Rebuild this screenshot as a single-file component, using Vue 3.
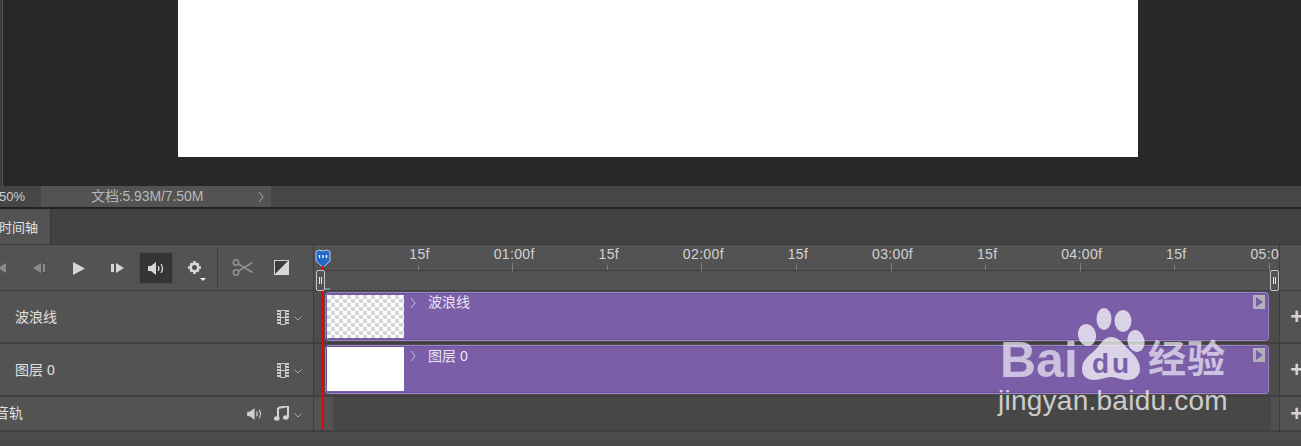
<script setup>
const ticks = ['15f','01:00f','15f','02:00f','15f','03:00f','15f','04:00f','15f','05:00f']
</script>

<template>
  <div class="app">
    <section class="canvas">
      <div class="ruler"></div>
      <div class="doc"></div>
    </section>

    <footer class="status">
      <span class="zoom">50%</span>
      <div class="info"><span>文档:5.93M/7.50M</span><svg class="chev" width="6" height="12" viewBox="0 0 6 12"><path d="M1 1l4 5-4 5" fill="none" stroke="#aaa"/></svg></div>
    </footer>

    <nav class="tabs"><div class="tab"><span>时间轴</span></div></nav>

    <main class="timeline">
      <div class="left">
        <div class="toolbar">
          <svg class="tb first" width="9" height="12" viewBox="0 0 9 12"><path d="M8 1v10L0 6z" fill="#8a8a8a"/></svg>
          <svg class="tb prev" width="14" height="12" viewBox="0 0 14 12"><path d="M9 1v10L1 6zM11 2h2v8h-2z" fill="#8a8a8a"/></svg>
          <svg class="tb play" width="12" height="13" viewBox="0 0 12 13"><path d="M0 0v13l12-6.500z" fill="#d6d6d6"/></svg>
          <svg class="tb next" width="14" height="12" viewBox="0 0 14 12"><path d="M0 2h3v8H0zM5 1v10l8-5z" fill="#d6d6d6"/></svg>
          <div class="audio-btn">
            <svg width="17" height="13" viewBox="0 0 17 13"><path d="M0 4h3l5-4v13L3 9H0z" fill="#d8d8d8"/><path d="M10 4q2 2.500 0 5M13 2q3 4.500 0 9" fill="none" stroke="#d8d8d8" stroke-width="1.200"/></svg>
          </div>
          <div class="gear">
            <svg width="13" height="13" viewBox="0 0 13 13"><circle cx="6.500" cy="6.500" r="3.800" fill="none" stroke="#d8d8d8" stroke-width="2.600"/><path d="M5.200 0h2.600v3H5.200zM5.200 10h2.600v3H5.200zM0 5.200h3v2.600H0zM10 5.200h3v2.600h-3zM1.500 3.300l1.800-1.800 2 2-1.800 1.800zM9.700 11.500l-2-2 1.800-1.800 2 2zM9.700 1.500l1.800 1.800-2 2-1.800-1.800zM3.300 11.500l-1.800-1.800 2-2 1.800 1.800z" fill="#d8d8d8"/><circle cx="6.500" cy="6.500" r="1.600" fill="#535353"/></svg>
            <i class="caret"></i>
          </div>
          <div class="sep"></div>
          <svg class="scissors" width="21" height="17" viewBox="0 0 21 17"><circle cx="4" cy="3.500" r="2.700" fill="none" stroke="#919191" stroke-width="1.600"/><circle cx="4" cy="13.500" r="2.700" fill="none" stroke="#919191" stroke-width="1.600"/><path d="M6.500 5l14 8.500M6.500 12l14-8.500" stroke="#919191" stroke-width="1.500"/></svg>
          <svg class="trans" width="15" height="15" viewBox="0 0 15 15"><rect x=".5" y=".5" width="14" height="14" fill="#3c3c3c" stroke="#d4d4d4"/><path d="M15 0v15H0z" fill="#d8d8d8"/></svg>
        </div>
        <div class="row r1">
          <span class="name">波浪线</span>
          <svg class="film" width="12" height="15" viewBox="0 0 12 15"><path d="M3.500 .5h5M3.500 14.500h5M3.500 .5v14M8.500 .5v14M3.500 7.500h5" fill="none" stroke="#c8c8c8"/><path d="M1.500 0v15M10.500 0v15" fill="none" stroke="#c8c8c8" stroke-width="3" stroke-dasharray="2 1"/></svg>
          <svg class="dn" width="8" height="5" viewBox="0 0 8 5"><path d="M.5 .5L4 4 7.500 .5" fill="none" stroke="#aaa"/></svg>
        </div>
        <div class="row r2">
          <span class="name">图层 0</span>
          <svg class="film" width="12" height="15" viewBox="0 0 12 15"><path d="M3.500 .5h5M3.500 14.500h5M3.500 .5v14M8.500 .5v14M3.500 7.500h5" fill="none" stroke="#c8c8c8"/><path d="M1.500 0v15M10.500 0v15" fill="none" stroke="#c8c8c8" stroke-width="3" stroke-dasharray="2 1"/></svg>
          <svg class="dn" width="8" height="5" viewBox="0 0 8 5"><path d="M.5 .5L4 4 7.500 .5" fill="none" stroke="#aaa"/></svg>
        </div>
        <div class="row r3">
          <span class="name audio-name">音轨</span>
          <svg class="spk" width="16" height="12" viewBox="0 0 17 13"><path d="M0 4h3l5-4v13L3 9H0z" fill="#d0d0d0"/><path d="M10 4q2 2.500 0 5M13 2q3 4.500 0 9" fill="none" stroke="#d0d0d0" stroke-width="1.200"/></svg>
          <svg class="note" width="15" height="15" viewBox="0 0 15 15"><path d="M4 2l10-2v11" fill="none" stroke="#d4d4d4" stroke-width="2"/><path d="M4 2v10" stroke="#d4d4d4" stroke-width="2"/><ellipse cx="2.800" cy="12.500" rx="2.800" ry="2.200" fill="#d4d4d4"/><ellipse cx="11.800" cy="11.500" rx="2.800" ry="2.200" fill="#d4d4d4"/></svg>
          <svg class="dn" width="8" height="5" viewBox="0 0 8 5"><path d="M.5 .5L4 4 7.500 .5" fill="none" stroke="#aaa"/></svg>
        </div>
      </div>

      <div class="right">
        <div class="ruler-row">
          <div class="scale">
            <div class="cell" v-for="(t, i) in ticks" :key="i" :class="{ major: i % 2 === 1 }">
              <span class="lbl">{{ t }}</span>
            </div>
          </div>
        </div>
        <div class="track r1">
          <div class="clip">
            <div class="thumb checker"></div>
            <svg class="cchev" width="6" height="12" viewBox="0 0 6 12"><path d="M1 1l4 5-4 5" fill="none" stroke="#c9bfe0"/></svg>
            <span class="ctitle">波浪线</span>
            <svg class="cplay" width="12" height="14" viewBox="0 0 12 14"><rect width="12" height="14" fill="#b3b0b8"/><path d="M3 2v10l7-5z" fill="#7b5ea8"/></svg>
          </div>
        </div>
        <div class="track r2">
          <div class="clip">
            <div class="thumb white"></div>
            <svg class="cchev" width="6" height="12" viewBox="0 0 6 12"><path d="M1 1l4 5-4 5" fill="none" stroke="#c9bfe0"/></svg>
            <span class="ctitle">图层 0</span>
            <svg class="cplay" width="12" height="14" viewBox="0 0 12 14"><rect width="12" height="14" fill="#b3b0b8"/><path d="M3 2v10l7-5z" fill="#7b5ea8"/></svg>
          </div>
        </div>
        <div class="track r3"></div>
      </div>

      <div class="adds">
        <div class="addhead"></div>
        <div class="add r1"><span>+</span></div>
        <div class="add r2"><span>+</span></div>
        <div class="add r3"><span>+</span></div>
      </div>

      <div class="playhead">
        <svg class="ph-top" width="16" height="19" viewBox="0 0 16 19"><path d="M1 2.500L4 1l4 1 4-1 3 1.500V12l-7 6.500L1 12z" fill="#2469c9" stroke="#b9cbe2"/><path d="M4.500 6v3M8 6v3M11.500 6v3" stroke="#fff" stroke-width="1.300"/></svg>
        <div class="ph-line"></div>
      </div>
      <div class="handle start"><i></i><i></i></div>
      <div class="handle end"><i></i><i></i></div>
    </main>

    <div class="mark">
      <svg class="paw" width="68" height="74" viewBox="0 0 68 74"><g fill="#fff"><ellipse cx="26" cy="11" rx="7.500" ry="11"/><ellipse cx="45" cy="13" rx="8.500" ry="11"/><ellipse cx="9" cy="27" rx="9" ry="11" transform="rotate(-12 9 27)"/><ellipse cx="58" cy="33" rx="8.500" ry="11" transform="rotate(-12 58 33)"/><path d="M33 29c8 0 12 7 18 13 7 6 11 12 11 19 0 8-7 11-13 11-6 0-11-3-16-3s-11 3-17 3c-7 0-12-4-12-11 0-8 6-13 12-18 6-5 9-14 17-14z"/></g></svg>
      <span class="bai">Bai</span><span class="du">du</span><span class="jy">经验</span>
      <span class="url">jingyan.baidu.com</span>
    </div>
  </div>
</template>

<style>
html, body { margin: 0; background: #4a4a4a; overflow: hidden; }
</style>

<style scoped>
.app { position: relative; width: 1301px; height: 446px; overflow: hidden; background: #4a4a4a; font-family: "Liberation Sans", "Noto Sans CJK SC", sans-serif; color: #d9d9d9; }

.canvas { height: 186px; background: #282828; display: flex; }
.ruler { width: 2px; background: #3c3c3c; border-right: 1px solid #535353; }
.doc { margin-left: 175px; width: 960px; height: 157px; background: #fff; }

.status { height: 21px; background: #464646; display: flex; font-size: 13px; line-height: 21px; border-bottom: 2px solid #222; }
.zoom { width: 42px; margin-left: -1px; color: #cfcfcf; }
.info { width: 230px; background: #535353; display: flex; align-items: center; color: #b8b8b8; padding-left: 50px; box-sizing: border-box; font-size: 14px; }
.info span { width: 167px; white-space: nowrap; letter-spacing: -.1px; }
.info .chev { margin-top: 1px; }

.tabs { height: 36px; background: #424242; border-bottom: 1px solid #383838; box-sizing: border-box; }
.tab { width: 51px; height: 35px; background: #535353; border-right: 1px solid #383838; box-sizing: border-box; overflow: hidden; font-size: 13px; line-height: 37px; color: #e2e2e2; }
.tab span { display: block; margin-left: -1px; width: 52px; white-space: nowrap; }

.timeline { position: relative; height: 193px; background: #4c4c4c; display: flex; align-items: flex-start; }
.left { width: 313px; background: #535353; }
.toolbar { height: 45px; position: relative; display: flex; align-items: center; border-bottom: 1px solid #404040; box-sizing: content-box; }
.tb { flex: none; }
.first { margin-left: -2px; margin-top: 1px; }
.prev { margin-left: 25px; margin-top: 1px; }
.play { margin-left: 27px; margin-top: 1px; }
.next { margin-left: 26px; margin-top: 1px; }
.audio-btn { width: 34px; height: 32px; margin-left: 14px; margin-top: 1px; background: #353535; border: 1px solid #4a4a4a; border-radius: 2px; box-sizing: border-box; display: flex; align-items: center; justify-content: center; }
.gear { position: relative; width: 13px; height: 13px; margin-left: 15px; }
.gear svg { display: block; }
.caret { position: absolute; left: 12px; top: 17px; border: 3px solid transparent; border-top: 3px solid #eee; border-bottom: 0; }
.sep { width: 1px; height: 40px; background: #414141; margin-left: 16px; }
.scissors { margin-left: 14px; }
.trans { margin-left: 21px; margin-top: 0; }

.row { display: flex; align-items: center; background: #535353; font-size: 14px; color: #e0e0e0; border-bottom: 2px solid #404040; box-sizing: border-box; position: relative; }
.r1 { height: 53px; }
.r2 { height: 53px; }
.r3 { height: 35px; }
.row.r1, .row.r2, .row.r3 { padding-right: 11px; }
.name { margin-left: 15px; flex: 1; margin-top: -2px; white-space: nowrap; }
.audio-name { margin-left: -5px; margin-top: -3px; }
.film { margin-right: 5px; margin-top: 2px; }
.dn { margin-top: 3px; }
.spk { margin-right: 11px; margin-top: 1px; }
.note { margin-right: 5px; margin-top: 0; }

.right { width: 966px; flex: none; background: #4f4f4f; border-left: 1px solid #3d3d3d; box-sizing: border-box; }
.ruler-row { height: 46px; background: #535353; border-bottom: 1px solid #404040; box-sizing: border-box; position: relative; overflow: hidden; }
.scale { display: flex; width: 946px; margin-left: 10px; height: 25px; border-bottom: 1px solid #404040; }
.cell { position: relative; flex: 1; }
.cell::after { content: ""; position: absolute; right: 0; bottom: 0; height: 5px; width: 1px; background: #808080; }
.cell.major::after { height: 8px; bottom: -1px; }
.lbl { position: absolute; right: -1px; transform: translateX(50%); top: 1px; font-size: 14px; letter-spacing: .35px; line-height: 16px; color: #d2d2d2; white-space: nowrap; }
.track { box-sizing: border-box; border-bottom: 2px solid #404040; background: #4c4c4c; }
.track.r1, .track.r2 { padding: 0 10px 0 11px; }
.track.r1 { height: 53px; padding-top: 1px; }
.track.r2 { height: 53px; padding-top: 1px; }
.track.r3 { height: 35px; background: linear-gradient(to right, #535353 19px, #474747 19px, #474747 957px, #505050 957px); }
.clip { position: relative; height: 49px; background: #7b5ea8; border: 1px solid #9d87c6; border-radius: 4px; box-sizing: border-box; display: flex; align-items: flex-start; box-shadow: inset 0 0 0 1px #6f539c; }
.thumb { width: 77px; margin-left: 1px; flex: none; }
.white { background: #fff; height: 44px; margin-top: 1px; }
.checker { height: 43px; margin-top: 2px; background: conic-gradient(#d6d6d6 25%, #fff 0 50%, #d6d6d6 0 75%, #fff 0) 0 0 / 8px 8px; }
.cchev { margin: 4px 0 0 6px; }
.ctitle { margin: 1px 0 0 12px; font-size: 14px; line-height: 17px; color: #e8e4f0; }
.track.r2 .ctitle { margin-top: 2px; }
.cplay { position: absolute; right: 3px; top: 2px; }

.adds { flex: 1; background: #4e4e4e; border-left: 1px solid #3d3d3d; box-sizing: border-box; }
.addhead { height: 46px; background: #535353; border-bottom: 1px solid #404040; box-sizing: border-box; }
.add { display: flex; align-items: center; justify-content: flex-end; border-bottom: 2px solid #404040; box-sizing: border-box; font-size: 22px; font-weight: bold; color: #d4d4d4; background: #535353; }
.add span { margin-right: -2px; }

.playhead { position: absolute; left: 315px; top: 4px; width: 16px; display: flex; flex-direction: column; align-items: center; }
.ph-top { display: block; }
.ph-line { width: 2px; height: 163px; margin-top: -2px; background: #f00000; }
.handle { position: absolute; top: 25px; width: 7px; height: 19px; border: 1px solid #c4c4c4; border-radius: 2px; background: #535353; box-sizing: content-box; display: flex; gap: 1px; align-items: center; justify-content: center; }
.handle i { width: 1px; height: 7px; background: #e8e8e8; }
.start { left: 316px; }
.start::after { content: ""; position: absolute; left: 8px; bottom: 0; width: 5px; height: 2px; background: #6f9a98; }
.end { left: 1270px; }

.mark { position: absolute; left: 995px; top: 300px; width: 240px; height: 146px; opacity: .72; pointer-events: none; color: #fff; }
.paw { position: absolute; left: 83px; top: 8px; }
.bai { position: absolute; left: 5px; top: 30px; font: bold 50px/60px "Liberation Sans", sans-serif; color: #ece8f4; }
.du { position: absolute; left: 97px; top: 49px; font: bold 28px/30px "Liberation Sans", sans-serif; color: #7b5ea8; letter-spacing: 3px; }
.jy { position: absolute; left: 153px; top: 26px; font: bold 38px/60px "Noto Sans CJK SC", sans-serif; color: #ece8f4; letter-spacing: 1px; white-space: nowrap; }
.url { position: absolute; left: 3px; top: 85px; font: 28px/32px "Liberation Sans", sans-serif; letter-spacing: .25px; white-space: nowrap; }
</style>
